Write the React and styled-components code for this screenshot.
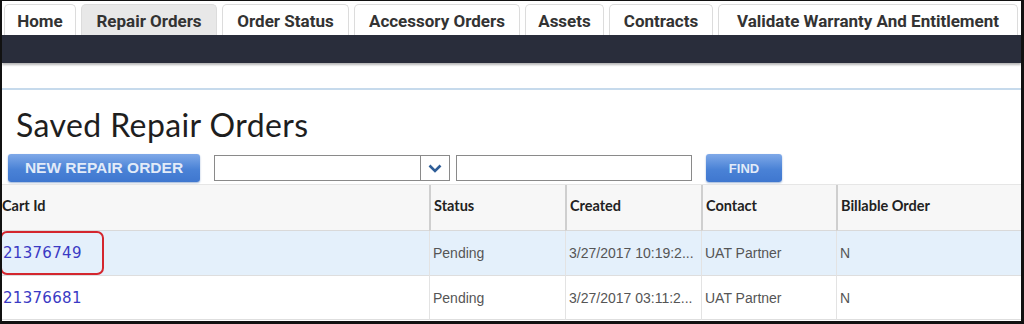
import React from "react";
import styled, { createGlobalStyle } from "styled-components";

const GlobalStyle = createGlobalStyle`
  body {
    margin: 0;
    background: #ffffff;
  }
`;

const tabs = [
  { label: "Home", width: 72 },
  { label: "Repair Orders", width: 136, active: true },
  { label: "Order Status", width: 127 },
  { label: "Accessory Orders", width: 166 },
  { label: "Assets", width: 79 },
  { label: "Contracts", width: 104 },
  { label: "Validate Warranty And Entitlement", width: 300 }
];

const rows = [
  {
    id: "21376749",
    status: "Pending",
    created: "3/27/2017 10:19:2...",
    contact: "UAT Partner",
    billable: "N",
    selected: true
  },
  {
    id: "21376681",
    status: "Pending",
    created: "3/27/2017 03:11:2...",
    contact: "UAT Partner",
    billable: "N"
  }
];

const App = () => {
  return (
    <>
      <GlobalStyle />
      <Frame>
        <TabBar>
          {tabs.map(tab => (
            <Tab key={tab.label} width={tab.width} active={tab.active}>
              {tab.label}
            </Tab>
          ))}
        </TabBar>
        <NavBar />
        <Divider />
        <Title>Saved Repair Orders</Title>
        <Toolbar>
          <BlueButton width={192}>NEW REPAIR ORDER</BlueButton>
          <Select>
            <SelectField />
            <SelectArrow>
              <svg width="14" height="9" viewBox="0 0 14 9">
                <path
                  d="M1.5 1.5 L7 7 L12.5 1.5"
                  fill="none"
                  stroke="#2f5e98"
                  strokeWidth="2.6"
                />
              </svg>
            </SelectArrow>
          </Select>
          <TextInput />
          <BlueButton width={76} small>
            FIND
          </BlueButton>
        </Toolbar>
        <Table>
          <HeaderCell>Cart Id</HeaderCell>
          <HeaderCell divider>Status</HeaderCell>
          <HeaderCell divider>Created</HeaderCell>
          <HeaderCell divider>Contact</HeaderCell>
          <HeaderCell divider>Billable Order</HeaderCell>
          {rows.map(row => (
            <React.Fragment key={row.id}>
              <Cell selected={row.selected}>
                <IdLink>{row.id}</IdLink>
                {row.selected && <Highlight />}
              </Cell>
              <Cell selected={row.selected} divider>
                {row.status}
              </Cell>
              <Cell selected={row.selected} divider>
                {row.created}
              </Cell>
              <Cell selected={row.selected} divider>
                {row.contact}
              </Cell>
              <Cell selected={row.selected} divider>
                {row.billable}
              </Cell>
            </React.Fragment>
          ))}
        </Table>
      </Frame>
    </>
  );
};

export default App;

const Frame = styled.div`
  width: 1024px;
  height: 324px;
  box-sizing: border-box;
  border-style: solid;
  border-color: #111111;
  border-width: 1px 3px 3px 2px;
  background: #ffffff;
  overflow: hidden;
  display: flex;
  flex-direction: column;
`;

const TabBar = styled.div`
  height: 34px;
  display: flex;
  align-items: flex-end;
  gap: 5px;
  padding-left: 2px;
  box-sizing: border-box;
`;

const Tab = styled.div`
  width: ${props => props.width}px;
  height: 31px;
  box-sizing: border-box;
  display: flex;
  align-items: center;
  justify-content: center;
  border: 1px solid #dcdcdc;
  border-bottom: none;
  border-radius: 5px 5px 0 0;
  background: ${props => (props.active ? "#e8e8e8" : "#ffffff")};
  font-family: Roboto, "Liberation Sans", sans-serif;
  font-size: 17px;
  font-weight: 700;
  color: #333333;
  white-space: nowrap;
  padding-top: 1px;
`;

const NavBar = styled.div`
  height: 28px;
  background: #292d3b;
  box-shadow: 0 2px 2px #b8b8b8;
`;

const Divider = styled.div`
  margin-top: 25px;
  height: 2px;
  background: #c6daec;
`;

const Title = styled.h1`
  margin: 17px 0 0 14px;
  font-family: Lato, "Liberation Sans", sans-serif;
  font-size: 32px;
  line-height: 36px;
  font-weight: 400;
  letter-spacing: 0.4px;
  color: #1e1e1e;
`;

const Toolbar = styled.div`
  margin-top: 10px;
  height: 30px;
  display: flex;
  align-items: center;
  padding-left: 6px;
`;

const BlueButton = styled.div`
  width: ${props => props.width}px;
  height: 28px;
  box-sizing: border-box;
  display: flex;
  align-items: center;
  justify-content: center;
  border-radius: 3px;
  background: linear-gradient(#7fa9e8, #4a82d6 55%, #3f77cf);
  box-shadow: 0 1px 2px #9db4d6;
  font-family: "Liberation Sans", Arial, sans-serif;
  font-size: ${props => (props.small ? "13px" : "15.5px")};
  font-weight: 700;
  color: #e2ebf8;
  margin-right: ${props => (props.small ? "0" : "14px")};
`;

const Select = styled.div`
  display: flex;
  height: 26px;
  margin-right: 6px;
`;

const SelectField = styled.div`
  width: 207px;
  border: 1px solid #8a8a8a;
  box-sizing: border-box;
  background: #ffffff;
`;

const SelectArrow = styled.div`
  width: 29px;
  border: 1px solid #8a8a8a;
  border-left: none;
  box-sizing: border-box;
  display: flex;
  align-items: center;
  justify-content: center;
  background: #ffffff;
`;

const TextInput = styled.div`
  width: 236px;
  height: 26px;
  border: 1px solid #8a8a8a;
  box-sizing: border-box;
  margin-right: 14px;
`;

const Table = styled.div`
  margin-top: 1px;
  display: grid;
  grid-template-columns: 427px 136px 136px 135px 1fr;
  grid-template-rows: 46px 45px 44px;
  border-top: 1px solid #e6e6e6;
`;

const HeaderCell = styled.div`
  display: flex;
  align-items: center;
  padding-left: ${props => (props.divider ? "3px" : "0")};
  background: #f7f7f7;
  border-bottom: 1px solid #d9d9d9;
  border-left: ${props => (props.divider ? "2px solid #cfcfcf" : "none")};
  font-family: Lato, "Liberation Sans", sans-serif;
  font-size: 14.5px;
  font-weight: 700;
  color: #222222;
  padding-bottom: 4px;
`;

const Cell = styled.div`
  position: relative;
  display: flex;
  align-items: center;
  padding-left: ${props => (props.divider ? "3px" : "1px")};
  background: ${props => (props.selected ? "#e4f0fb" : "#ffffff")};
  border-bottom: 1px solid #dedede;
  border-left: ${props => (props.divider ? "1px solid #e3e3e3" : "none")};
  font-family: "Liberation Sans", Arial, sans-serif;
  font-size: 14px;
  color: #555555;
  white-space: nowrap;
  overflow: visible;
`;

const IdLink = styled.span`
  font-family: "DejaVu Sans", Verdana, sans-serif;
  font-size: 15px;
  color: #3a3ac4;
  letter-spacing: 0.3px;
`;

const Highlight = styled.div`
  position: absolute;
  left: -2px;
  top: 0px;
  width: 104px;
  height: 44px;
  box-sizing: border-box;
  border: 2px solid #d4262e;
  border-radius: 7px;
`;
